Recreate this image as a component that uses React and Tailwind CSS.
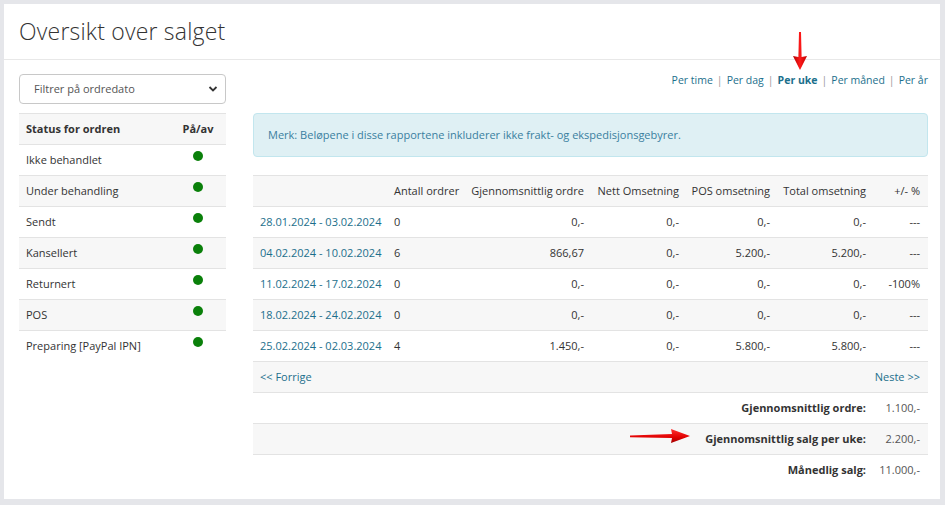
import React from 'react';

const statuses = [
  'Ikke behandlet',
  'Under behandling',
  'Sendt',
  'Kansellert',
  'Returnert',
  'POS',
  'Preparing [PayPal IPN]',
];

const rows = [
  { period: '28.01.2024 - 03.02.2024', count: '0', avg: '0,-', net: '0,-', pos: '0,-', total: '0,-', pct: '---' },
  { period: '04.02.2024 - 10.02.2024', count: '6', avg: '866,67', net: '0,-', pos: '5.200,-', total: '5.200,-', pct: '---' },
  { period: '11.02.2024 - 17.02.2024', count: '0', avg: '0,-', net: '0,-', pos: '0,-', total: '0,-', pct: '-100%' },
  { period: '18.02.2024 - 24.02.2024', count: '0', avg: '0,-', net: '0,-', pos: '0,-', total: '0,-', pct: '---' },
  { period: '25.02.2024 - 02.03.2024', count: '4', avg: '1.450,-', net: '0,-', pos: '5.800,-', total: '5.800,-', pct: '---' },
];

const summary = [
  { label: 'Gjennomsnittlig ordre:', value: '1.100,-' },
  { label: 'Gjennomsnittlig salg per uke:', value: '2.200,-' },
  { label: 'Månedlig salg:', value: '11.000,-' },
];

const periods = ['Per time', 'Per dag', 'Per uke', 'Per måned', 'Per år'];

function DownArrow() {
  return (
    <svg className="absolute left-[787px] top-[26px]" width="18" height="42" viewBox="0 0 18 42">
      <defs>
        <linearGradient id="dg" x1="0" y1="0" x2="1" y2="0">
          <stop offset="0%" stopColor="#b30000" />
          <stop offset="50%" stopColor="#ff1a1a" />
          <stop offset="100%" stopColor="#c00000" />
        </linearGradient>
      </defs>
      <path d="M8 2 L10 2 L10.6 27 L16 26 L9 40 L2 26 L7.4 27 Z" fill="url(#dg)" />
    </svg>
  );
}

function RightArrow() {
  return (
    <svg className="absolute left-[624px] top-[423px]" width="64" height="18" viewBox="0 0 64 18">
      <defs>
        <linearGradient id="rg" x1="0" y1="0" x2="0" y2="1">
          <stop offset="0%" stopColor="#ff3030" />
          <stop offset="60%" stopColor="#e00000" />
          <stop offset="100%" stopColor="#a00000" />
        </linearGradient>
      </defs>
      <path d="M2 8.6 L44 7 L43 2 L62 9 L43 16 L44 11 L2 10.2 Z" fill="url(#rg)" />
    </svg>
  );
}

export default function App() {
  return (
    <div className="min-h-[505px] bg-[#e5e6ea] pt-[4px] pl-[4px] pr-[5px] pb-[6px] text-[11px] text-[#333]" style={{ fontFamily: '"Open Sans", "Liberation Sans", sans-serif' }}>
      <div className="relative bg-white h-[495px]">
        {/* Header */}
        <div className="h-[56px] border-b border-[#e8e8e8] pl-[15px] flex items-center">
          <h1 className="text-[23px] font-light text-[#333] tracking-[0.2px]">Oversikt over salget</h1>
        </div>

        <div className="flex pl-[15px] pr-[12px] pt-[14px]">
          {/* Left column */}
          <div className="w-[207px] shrink-0">
            <div className="h-[30px] border border-[#c8c8c8] rounded-[4px] flex items-center justify-between pl-[14px] pr-[7px] text-[#555]">
              <span>Filtrer på ordredato</span>
              <svg width="10" height="10" viewBox="0 0 10 10">
                <path d="M1.5 3 L5 6.5 L8.5 3" fill="none" stroke="#333" strokeWidth="1.8" />
              </svg>
            </div>
            <table className="w-full mt-[9px] border-collapse">
              <tbody>
                <tr className="h-[31px] bg-[#f7f7f7] border-t border-b border-[#e3e3e3]">
                  <td className="pl-[7px] font-bold">Status for ordren</td>
                  <td className="w-[54px] text-center font-bold pr-[2px]">På/av</td>
                </tr>
                {statuses.map((s, i) => (
                  <tr key={s} className={`h-[31px] ${i < statuses.length - 1 ? 'border-b border-[#e3e3e3]' : ''} ${i % 2 === 1 ? 'bg-[#f7f7f7]' : 'bg-white'}`}>
                    <td className="pl-[7px]">{s}</td>
                    <td className="align-top pt-[6px] pr-[2px]">
                      <div className="flex justify-center">
                        <span className="block w-[10px] h-[10px] rounded-full bg-[#0a800a]" />
                      </div>
                    </td>
                  </tr>
                ))}
              </tbody>
            </table>
          </div>

          {/* Right column */}
          <div className="flex-1 ml-[27px]">
            <div className="h-[24px] flex justify-end items-start text-[#1c6f8c] text-[10.5px] leading-[13px]">
              {periods.map((p, i) => (
                <React.Fragment key={p}>
                  {i > 0 && <span className="text-[#999] mx-[4px]">|</span>}
                  <span className={p === 'Per uke' ? 'font-bold' : ''}>{p}</span>
                </React.Fragment>
              ))}
            </div>
            <div className="mt-[15px] h-[44px] bg-[#dff0f4] border border-[#c2e6ee] rounded-[4px] flex items-center pl-[14px] text-[#3a7fa0]">
              Merk: Beløpene i disse rapportene inkluderer ikke frakt- og ekspedisjonsgebyrer.
            </div>
            <table className="w-full table-fixed border-collapse mt-[18px]">
              <colgroup>
                <col className="w-[134px]" />
                <col className="w-[79px]" />
                <col className="w-[125px]" />
                <col className="w-[95px]" />
                <col className="w-[91px]" />
                <col className="w-[96px]" />
                <col className="w-[55px]" />
              </colgroup>
              <tbody>
                <tr className="h-[31px] bg-[#f7f7f7] border-t border-b border-[#e3e3e3]">
                  <td />
                  <td className="pl-[7px] whitespace-nowrap">Antall ordrer</td>
                  <td className="pr-[7px] text-right whitespace-nowrap">Gjennomsnittlig ordre</td>
                  <td className="pr-[7px] text-right whitespace-nowrap">Nett Omsetning</td>
                  <td className="pr-[7px] text-right whitespace-nowrap">POS omsetning</td>
                  <td className="pr-[7px] text-right whitespace-nowrap">Total omsetning</td>
                  <td className="pr-[8px] text-right whitespace-nowrap">+/- %</td>
                </tr>
                {rows.map((r, i) => (
                  <tr key={r.period} className={`h-[31px] border-b border-[#e3e3e3] ${i % 2 === 1 ? 'bg-[#f7f7f7]' : 'bg-white'}`}>
                    <td className="pl-[7px] text-[#1c6f8c] whitespace-nowrap">{r.period}</td>
                    <td className="pl-[7px]">{r.count}</td>
                    <td className="pr-[7px] text-right">{r.avg}</td>
                    <td className="pr-[7px] text-right">{r.net}</td>
                    <td className="pr-[7px] text-right">{r.pos}</td>
                    <td className="pr-[7px] text-right">{r.total}</td>
                    <td className="pr-[8px] text-right">{r.pct}</td>
                  </tr>
                ))}
                <tr className="h-[31px] bg-[#f7f7f7] border-b border-[#e3e3e3] text-[#1c6f8c]">
                  <td colSpan={4} className="pl-[7px]">&lt;&lt; Forrige</td>
                  <td colSpan={3} className="pr-[8px] text-right">Neste &gt;&gt;</td>
                </tr>
                {summary.map((s, i) => (
                  <tr key={s.label} className={`h-[31px] ${i < summary.length - 1 ? 'border-b border-[#e3e3e3]' : ''} ${i === 1 ? 'bg-[#f7f7f7]' : 'bg-white'}`}>
                    <td colSpan={6} className="pr-[7px] text-right font-bold">{s.label}</td>
                    <td className="pr-[8px] text-right text-[#555]">{s.value}</td>
                  </tr>
                ))}
              </tbody>
            </table>
          </div>
        </div>

        <DownArrow />
        <RightArrow />
      </div>
    </div>
  );
}
